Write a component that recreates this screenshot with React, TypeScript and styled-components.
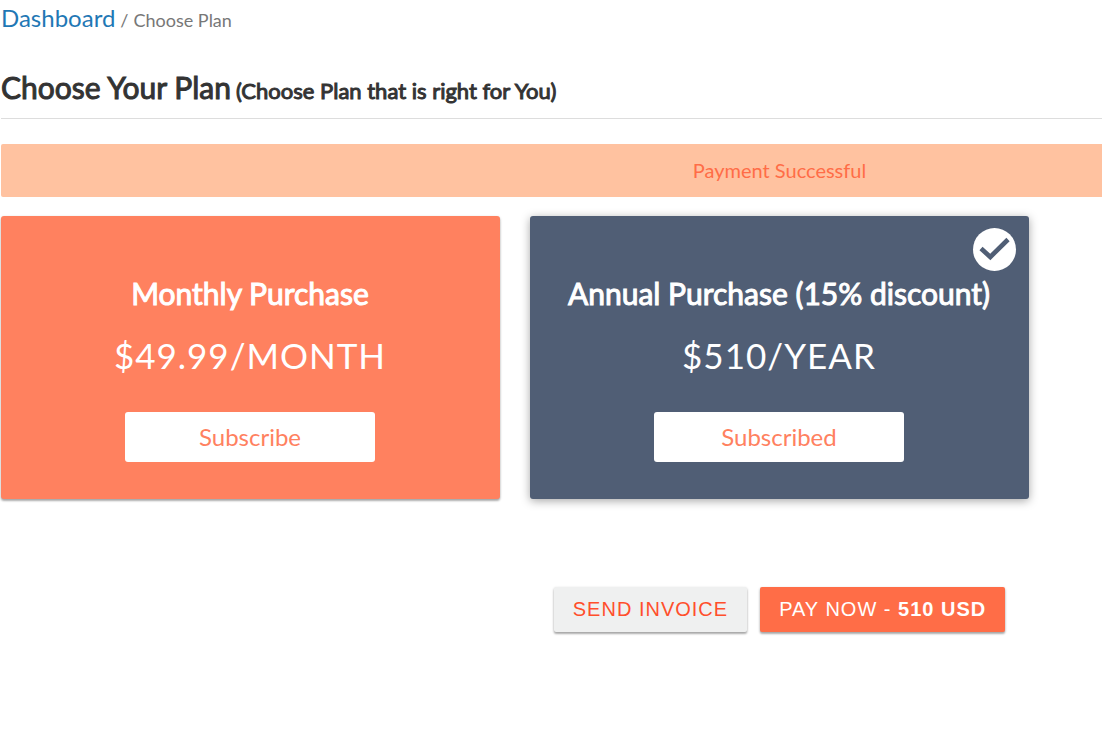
import React from "react";
import styled, { createGlobalStyle, css } from "styled-components";

const GlobalStyle = createGlobalStyle`
  * { box-sizing: border-box; }
  body {
    margin: 0;
    background: #fff;
    color: #333;
    font-family: Lato, sans-serif;
  }
`;

const columns = css`
  display: grid;
  grid-template-columns: repeat(2, minmax(0, 499px));
  column-gap: 30px;
`;

const heavy = css`
  font-weight: 400;
  -webkit-text-stroke: 1px currentColor;
`;

const Page = styled.main`
  padding-left: 1px;
`;

const Breadcrumb = styled.nav`
  display: flex;
  align-items: baseline;
  gap: 5px;
  height: 38px;
  padding-top: 3px;
  font-size: 18px;
  line-height: 30px;
  color: #777;
`;

const HomeLink = styled.a`
  font-size: 24px;
  color: #1f78b5;
  text-decoration: none;
`;

const Header = styled.header`
  display: flex;
  align-items: baseline;
  gap: 5px;
  padding: 29px 0 11px;
  margin-bottom: 25px;
  border-bottom: 1px solid #ddd;
`;

const Title = styled.h1`
  margin: 0;
  font-size: 30px;
  line-height: 40px;
  ${heavy}
`;

const Subtitle = styled.small`
  font-size: 22px;
  ${heavy}
`;

const Banner = styled.div`
  ${columns}
  padding: 14px 0 15px;
  margin-bottom: 19px;
  border-radius: 2px 0 0 2px;
  background: #ffc2a0;
  color: #ff6d47;
  font-size: 20px;
  line-height: 24px;
  text-align: center;
`;

const BannerText = styled.span`
  grid-column: 2;
`;

const Plans = styled.div`
  ${columns}
`;

const Card = styled.section<{ $active?: boolean }>`
  position: relative;
  display: flex;
  flex-direction: column;
  align-items: center;
  padding: 57px 17px 37px 16px;
  border-radius: 3px;
  background: ${(p) => (p.$active ? "#505e75" : "#ff815f")};
  color: #fff;
  box-shadow: ${(p) =>
    p.$active
      ? "0 2px 10px rgba(0, 0, 0, 0.35)"
      : "0 1px 3px rgba(0, 0, 0, 0.2), 0 2px 2px rgba(0, 0, 0, 0.24)"};
`;

const PlanName = styled.h2`
  margin: 0;
  font-size: 30px;
  line-height: 40px;
  text-align: center;
  ${heavy}
`;

const Price = styled.p`
  margin: 19px 0 34px;
  font-size: 35px;
  line-height: 46px;
  letter-spacing: 1px;
`;

const PlanButton = styled.button`
  width: 250px;
  height: 50px;
  padding: 0 0 2px;
  border: 0;
  border-radius: 3px;
  background: #fff;
  color: #ff815f;
  font-family: inherit;
  font-size: 24px;
`;

const Badge = styled.span`
  position: absolute;
  top: 12px;
  right: 13px;
  width: 43px;
  height: 43px;
  border-radius: 50%;
  background: #fff;
  color: #505e75;

  svg { display: block; }
`;

const Actions = styled.div`
  ${columns}
  padding: 88px 0 24px;
`;

const ActionGroup = styled.div`
  grid-column: 2;
  display: flex;
  justify-content: center;
  gap: 13px;
`;

const ActionButton = styled.button<{ $primary?: boolean }>`
  height: 45px;
  padding: 0 19px 1px;
  border: 0;
  border-radius: 2px;
  background: ${(p) => (p.$primary ? "#ff6d47" : "#eff0f0")};
  color: ${(p) => (p.$primary ? "#fff" : "#ff4f2c")};
  font-family: "Liberation Sans", Arial, sans-serif;
  font-size: 20px;
  letter-spacing: 1px;
  white-space: nowrap;
  text-transform: uppercase;
  box-shadow: 0 1px 3px rgba(0, 0, 0, 0.2), 0 2px 2px rgba(0, 0, 0, 0.24);
`;

function SelectedBadge() {
  return (
    <Badge>
      <svg width="43" height="43" viewBox="0 0 43 43" role="img" aria-label="Selected">
        <path d="M8 20.5 L17.3 29 L35 11.5" fill="none" stroke="currentColor" strokeWidth="4.6" />
      </svg>
    </Badge>
  );
}

interface PlanProps {
  name: string;
  price: string;
  active?: boolean;
}

function Plan({ name, price, active }: PlanProps) {
  return (
    <Card $active={active}>
      {active && <SelectedBadge />}
      <PlanName>{name}</PlanName>
      <Price>{price}</Price>
      <PlanButton type="button">{active ? "Subscribed" : "Subscribe"}</PlanButton>
    </Card>
  );
}

export default function App() {
  return (
    <Page>
      <GlobalStyle />
      <Breadcrumb aria-label="Breadcrumb">
        <HomeLink href="#dashboard">Dashboard</HomeLink>
        <span>/</span>
        <span>Choose Plan</span>
      </Breadcrumb>
      <Header>
        <Title>Choose Your Plan</Title>
        <Subtitle>(Choose Plan that is right for You)</Subtitle>
      </Header>
      <Banner role="status">
        <BannerText>Payment Successful</BannerText>
      </Banner>
      <Plans>
        <Plan name="Monthly Purchase" price="$49.99/MONTH" />
        <Plan name="Annual Purchase (15% discount)" price="$510/YEAR" active />
      </Plans>
      <Actions>
        <ActionGroup>
          <ActionButton type="button">Send Invoice</ActionButton>
          <ActionButton type="button" $primary>
            Pay Now - <strong>510 USD</strong>
          </ActionButton>
        </ActionGroup>
      </Actions>
    </Page>
  );
}
